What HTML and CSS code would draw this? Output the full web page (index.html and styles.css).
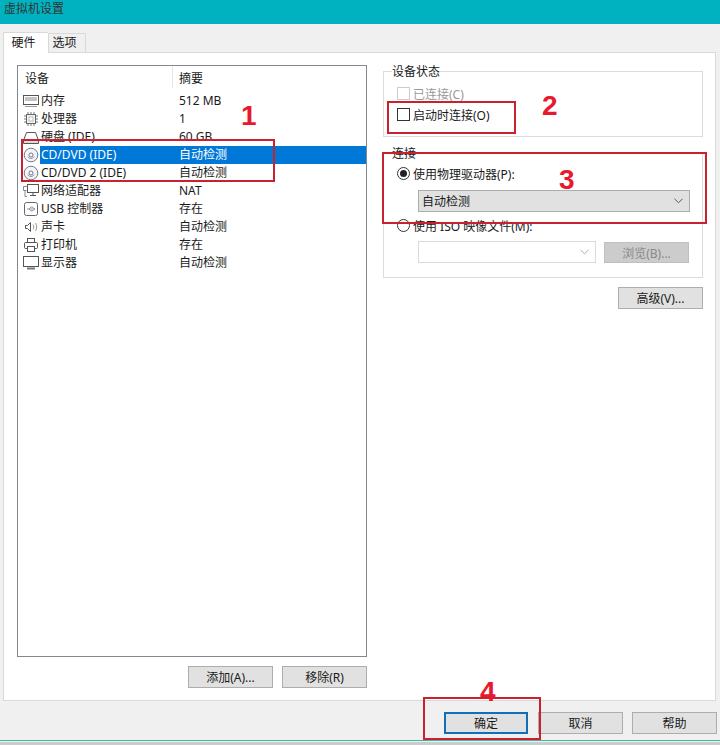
FILE: index.html
```html
<!DOCTYPE html>
<html lang="zh-CN">
<head>
  <meta charset="UTF-8">
  <title>虚拟机设置</title>
  <link rel="stylesheet" href="styles.css">
</head>
<body>
  <div class="dialog">
    <div class="titlebar">虚拟机设置</div>

    <div class="tabs">
      <div class="tab active">硬件</div>
      <div class="tab">选项</div>
    </div>

    <div class="panel">
      <div class="left">
        <div class="listbox">
          <div class="list-head">
            <div class="col-device">设备</div>
            <div class="col-summary">摘要</div>
          </div>

          <div class="row">
            <svg class="icon" viewBox="0 0 16 16"><rect x="0.5" y="2.5" width="15" height="9" fill="#fff" stroke="#555"/><path d="M2 5h12M2 7h12" stroke="#888" stroke-width="1.2"/><path d="M2 13.5h12" stroke="#999"/></svg>
            <div class="name">内存</div>
            <div class="summary">512 MB</div>
          </div>
          <div class="row">
            <svg class="icon" viewBox="0 0 16 16"><rect x="3.5" y="3.5" width="9" height="9" fill="#f4f4f4" stroke="#666"/><rect x="6" y="6" width="4" height="4" fill="#fff" stroke="#bbb"/><path d="M5 1v2M8 1v2M11 1v2M5 13v2M8 13v2M11 13v2M1 5h2M1 8h2M1 11h2M13 5h2M13 8h2M13 11h2" stroke="#777"/></svg>
            <div class="name">处理器</div>
            <div class="summary">1</div>
          </div>
          <div class="row">
            <svg class="icon" viewBox="0 0 16 16"><path d="M3.5 3.5h9l3 8h-15z" fill="#fff" stroke="#555"/><path d="M0.5 11.5h15v3h-15z" fill="#ddd" stroke="#555"/></svg>
            <div class="name">硬盘 (IDE)</div>
            <div class="summary">60 GB</div>
          </div>
          <div class="row selected">
            <svg class="icon" viewBox="0 0 16 16"><circle cx="8" cy="8" r="6.8" fill="#f2f5f7" stroke="#778"/><path d="M4.800 9.500a3.500 3.500 0 0 0 6.400 0" fill="none" stroke="#99a"/><circle cx="8" cy="8" r="2" fill="#fff" stroke="#778"/></svg>
            <div class="name">CD/DVD (IDE)</div>
            <div class="summary">自动检测</div>
          </div>
          <div class="row">
            <svg class="icon" viewBox="0 0 16 16"><circle cx="8" cy="8" r="6.8" fill="#f2f5f7" stroke="#778"/><path d="M4.800 9.500a3.500 3.500 0 0 0 6.400 0" fill="none" stroke="#99a"/><circle cx="8" cy="8" r="2" fill="#fff" stroke="#778"/></svg>
            <div class="name">CD/DVD 2 (IDE)</div>
            <div class="summary">自动检测</div>
          </div>
          <div class="row">
            <svg class="icon" viewBox="0 0 16 16"><rect x="4.500" y="1.500" width="11" height="8" fill="#fff" stroke="#555"/><path d="M10 9.500v3M7 12.500h6" stroke="#555"/><path d="M0.500 3.500h4M0.500 3.500v4h3M2 7.500v6h2" fill="none" stroke="#888"/></svg>
            <div class="name">网络适配器</div>
            <div class="summary">NAT</div>
          </div>
          <div class="row">
            <svg class="icon" viewBox="0 0 16 16"><rect x="1.500" y="1.500" width="13" height="13" rx="2" fill="#fff" stroke="#666"/><path d="M4 8h8M9 6l3 2-3 2M6 8l2-2h1M6 8l2 2h1" fill="none" stroke="#99a"/></svg>
            <div class="name">USB 控制器</div>
            <div class="summary">存在</div>
          </div>
          <div class="row">
            <svg class="icon" viewBox="0 0 16 16"><path d="M2.500 6.500h2l3-3v9l-3-3h-2z" fill="#fff" stroke="#555"/><path d="M10 5.500c1 1.500 1 3.500 0 5M12.500 4c1.500 2.500 1.500 5.500 0 8" fill="none" stroke="#999"/></svg>
            <div class="name">声卡</div>
            <div class="summary">自动检测</div>
          </div>
          <div class="row">
            <svg class="icon" viewBox="0 0 16 16"><rect x="4.500" y="1.500" width="7" height="4" fill="#fff" stroke="#555"/><rect x="1.500" y="5.500" width="13" height="6" rx="1" fill="#fff" stroke="#555"/><rect x="4.500" y="9.500" width="7" height="5" fill="#fff" stroke="#555"/></svg>
            <div class="name">打印机</div>
            <div class="summary">存在</div>
          </div>
          <div class="row">
            <svg class="icon" viewBox="0 0 16 16"><rect x="0.500" y="1.500" width="15" height="10" fill="#fff" stroke="#555"/><path d="M4 13.500h8" stroke="#777" stroke-width="2"/></svg>
            <div class="name">显示器</div>
            <div class="summary">自动检测</div>
          </div>
        </div>

        <div class="list-buttons">
          <button class="btn">添加(A)...</button>
          <button class="btn">移除(R)</button>
        </div>
      </div>

      <div class="right">
        <fieldset class="group group-status">
          <legend>设备状态</legend>
          <label class="option disabled"><span class="checkbox"></span>已连接(C)</label>
          <label class="option"><span class="checkbox"></span>启动时连接(O)</label>
        </fieldset>

        <fieldset class="group group-connect">
          <legend>连接</legend>
          <label class="option"><span class="radio checked"></span>使用物理驱动器(P):</label>
          <div class="combo">自动检测<svg class="caret" viewBox="0 0 10 6"><path d="M0.500 0.500l4.500 4.500 4.500-4.500" fill="none" stroke="#555" stroke-width="1.100"/></svg></div>
          <label class="option option-iso"><span class="radio"></span>使用 ISO 映像文件(M):</label>
          <div class="iso-row">
            <div class="combo combo-off"><svg class="caret" viewBox="0 0 10 6"><path d="M0.500 0.500l4.500 4.500 4.500-4.500" fill="none" stroke="#aaa" stroke-width="1.100"/></svg></div>
            <button class="btn btn-off">浏览(B)...</button>
          </div>
        </fieldset>

        <div class="advanced">
          <button class="btn">高级(V)...</button>
        </div>
      </div>
    </div>

    <div class="footer">
      <button class="btn btn-default">确定</button>
      <button class="btn">取消</button>
      <button class="btn">帮助</button>
    </div>
    <div class="bottom-edge"></div>
  </div>

  <!-- red annotations drawn over the screenshot -->
  <div class="mark mark-1"></div>
  <div class="mark mark-2"></div>
  <div class="mark mark-3"></div>
  <div class="mark mark-4"></div>
  <div class="num num-1">1</div>
  <div class="num num-2">2</div>
  <div class="num num-3">3</div>
  <div class="num num-4">4</div>
</body>
</html>
```

FILE: styles.css
```css
html, body {
  margin: 0;
  padding: 0;
}

body {
  position: relative;
  width: 720px;
  height: 745px;
  overflow: hidden;
  font-family: "Noto Sans", "Noto Sans CJK SC", sans-serif;
  font-size: 12px;
  color: #1a1a1a;
  background: #c9cdcd;
}

.dialog {
  display: flex;
  flex-direction: column;
  height: 742px;
  background: #f0f0f0;
}

.titlebar {
  height: 24px;
  line-height: 18px;
  padding-left: 4px;
  background: #00b2bf;
  color: #333;
  flex: none;
}

.tabs {
  display: flex;
  align-items: flex-end;
  height: 28px;
  padding-left: 3px;
  flex: none;
}

.tab {
  box-sizing: border-box;
  height: 19px;
  width: 38px;
  padding-right: 5px;
  line-height: 18px;
  text-align: center;
  background: #f0f0f0;
  border: 1px solid #d9d9d9;
  border-bottom: none;
}

.tab.active {
  height: 21px;
  width: 45px;
  line-height: 20px;
  background: #fff;
  border-right: none;
  margin-bottom: -1px;
  position: relative;
}

.panel {
  display: flex;
  height: 635px;
  margin: 0 4px 0 3px;
  padding: 12px 12px 0 13px;
  background: #fff;
  border: 1px solid #d9d9d9;
  flex: none;
}

.left {
  width: 350px;
  flex: none;
}

.listbox {
  height: 590px;
  border: 1px solid #828790;
}

.list-head {
  display: flex;
  height: 26px;
  line-height: 25px;
}

.col-device {
  box-sizing: border-box;
  width: 155px;
  height: 22px;
  padding-left: 7px;
  border-right: 1px solid #e5e5e5;
}

.col-summary {
  padding-left: 6px;
}

.row {
  display: flex;
  align-items: center;
  height: 18px;
}

.icon {
  width: 16px;
  height: 16px;
  margin: 0 1px 0 5px;
  flex: none;
}

.name {
  width: 138px;
  padding-left: 1px;
  height: 18px;
  line-height: 18px;
  flex: none;
}

.summary {
  flex: 1;
  height: 18px;
  line-height: 18px;
}

.row.selected .name,
.row.selected .summary {
  background: #0078d7;
  color: #fff;
}

.list-buttons {
  display: flex;
  justify-content: flex-end;
  gap: 9px;
  margin-top: 9px;
}

.btn {
  width: 85px;
  height: 22px;
  padding: 0;
  font: inherit;
  color: #1a1a1a;
  background: #e1e1e1;
  border: 1px solid #adadad;
  flex: none;
}

.right {
  width: 320px;
  margin-left: 16px;
  flex: none;
}

.group {
  box-sizing: border-box;
  margin: 0;
  padding: 0 0 0 13px;
  border: 1px solid #dcdcdc;
}

.group legend {
  padding: 0;
  margin-left: -5px;
  line-height: 13px;
  background: #fff;
}

.group-status {
  height: 72px;
}

.group-connect {
  height: 131px;
  margin-top: 10px;
}

.option {
  display: flex;
  align-items: center;
  height: 21px;
  gap: 3px;
}

.option.disabled {
  color: #999;
}

.checkbox {
  width: 11px;
  height: 11px;
  background: #fff;
  border: 1px solid #333;
  flex: none;
}

.disabled .checkbox {
  border-color: #ccc;
}

.radio {
  position: relative;
  width: 11px;
  height: 11px;
  border: 1px solid #333;
  border-radius: 50%;
  background: #fff;
  flex: none;
}

.radio.checked::after {
  content: "";
  position: absolute;
  left: 2px;
  top: 2px;
  width: 7px;
  height: 7px;
  border-radius: 50%;
  background: #222;
}

.group-status .option:first-of-type {
  margin-top: 5px;
}

.group-connect .option:first-of-type {
  margin-top: 3px;
}

.combo {
  display: flex;
  align-items: center;
  justify-content: space-between;
  box-sizing: border-box;
  width: 272px;
  height: 22px;
  margin: 6px 0 0 21px;
  padding: 0 6px 0 3px;
  background: #e1e1e1;
  border: 1px solid #adadad;
}

.caret {
  width: 9px;
  height: 6px;
}

.option-iso {
  margin-top: 3px;
}

.iso-row {
  display: flex;
  align-items: flex-end;
  gap: 8px;
  margin-top: 5px;
  margin-left: 21px;
}

.combo-off {
  width: 178px;
  margin: 0;
  justify-content: flex-end;
  background: #fff;
  border-color: #d9d9d9;
}

.btn-off {
  width: 85px;
  height: 21px;
  background: #ccc;
  border-color: #bfbfbf;
  color: #888;
}

.advanced {
  display: flex;
  justify-content: flex-end;
  margin-top: 9px;
}

.footer {
  display: flex;
  justify-content: flex-end;
  gap: 9px;
  padding: 11px 3px 0 0;
  height: 28px;
  flex: none;
}

.btn-default {
  width: 84px;
  border: 2px solid #0f6fb8;
  margin-right: 1px;
}

.bottom-edge {
  height: 1px;
  background: #3fb5a8;
  flex: none;
}

.mark {
  position: absolute;
  border: 2px solid #c8222f;
  box-sizing: border-box;
}

.mark-1 { left: 21px; top: 139px; width: 254px; height: 43px; }
.mark-2 { left: 387px; top: 101px; width: 129px; height: 33px; }
.mark-3 { left: 382px; top: 152px; width: 325px; height: 72px; }
.mark-4 { left: 423px; top: 697px; width: 118px; height: 43px; }

.num {
  position: absolute;
  font-family: "Liberation Sans", Arial, sans-serif;
  font-size: 28px;
  font-weight: bold;
  line-height: 30px;
  color: #e8192c;
}

.num-1 { left: 241px; top: 101px; }
.num-2 { left: 542px; top: 91px; }
.num-3 { left: 559px; top: 165px; }
.num-4 { left: 480px; top: 677px; }
```
